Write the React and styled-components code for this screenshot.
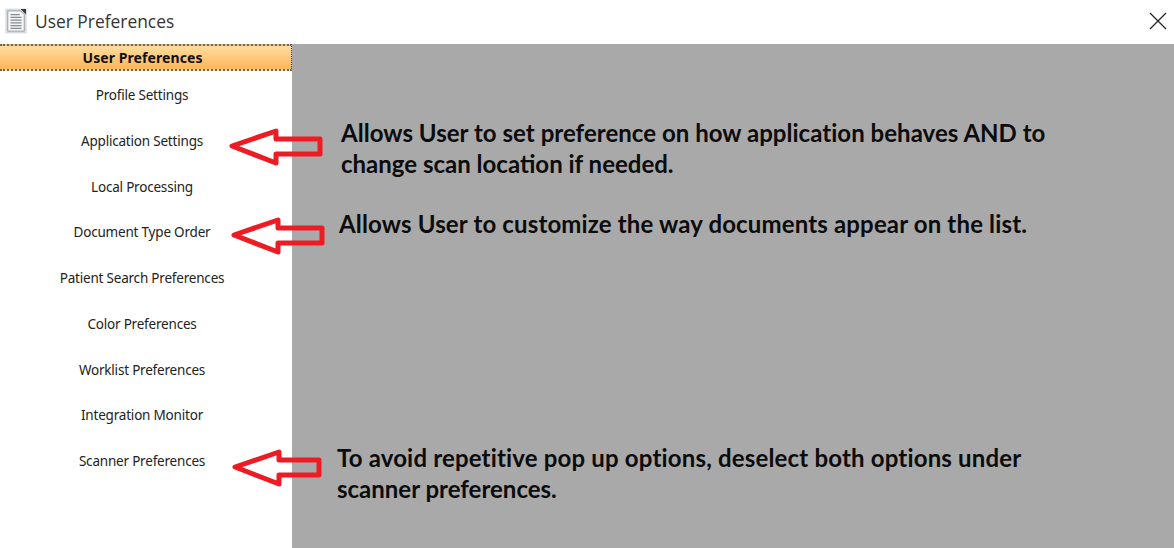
import React from 'react';
import styled, { createGlobalStyle } from 'styled-components';

const menuItems = [
  'Profile Settings',
  'Application Settings',
  'Local Processing',
  'Document Type Order',
  'Patient Search Preferences',
  'Color Preferences',
  'Worklist Preferences',
  'Integration Monitor',
  'Scanner Preferences',
];

const arrows = [
  { left: 229, top: 127, tail: 91 },
  { left: 231, top: 216, tail: 91 },
  { left: 232, top: 448, tail: 87 },
];

const notes = [
  {
    left: 341,
    top: 117,
    spacing: 0.03,
    lines: ['Allows User to set preference on how application behaves AND to', 'change scan location if needed.'],
  },
  {
    left: 339,
    top: 208,
    spacing: 0.15,
    lines: ['Allows User to customize the way documents appear on the list.'],
  },
  {
    left: 337,
    top: 442,
    spacing: 0.17,
    lines: ['To avoid repetitive pop up options, deselect both options under', 'scanner preferences.'],
  },
];

function PageIcon() {
  return (
    <svg width="22" height="26" viewBox="0 0 24 28">
      <rect x="0.5" y="0.5" width="23" height="27" fill="#d5d9dc" />
      <path d="M3 3H17L21 7V25H3Z" fill="#f4f5f6" stroke="#9aa0a4" />
      <path d="M17 1H23V7Z" fill="#33393d" />
      <path
        d="M6 7H16M6 10H18M6 13H18M6 16H18M6 19H18M6 22H18"
        stroke="#858b90"
        strokeWidth="1.4"
      />
    </svg>
  );
}

function CloseIcon() {
  return (
    <svg width="18" height="18" viewBox="0 0 18 18">
      <path d="M1 1L17 17M17 1L1 17" stroke="#222" strokeWidth="1.2" fill="none" />
    </svg>
  );
}

function Arrow({ tail }) {
  return (
    <svg width="96" height="40" viewBox="0 0 96 40">
      <path
        d={`M3 19L47 4V12H${tail}V27H47V36Z`}
        fill="none"
        stroke="#ed1c24"
        strokeWidth="5"
        strokeLinejoin="round"
      />
    </svg>
  );
}

function App() {
  return (
    <>
      <GlobalStyle />
      <Window>
        <TitleBar>
          <TitleGroup>
            <PageIcon />
            <Title>User Preferences</Title>
          </TitleGroup>
          <CloseButton>
            <CloseIcon />
          </CloseButton>
        </TitleBar>
        <Content>
          <Sidebar>
            <SidebarHeader>User Preferences</SidebarHeader>
            <MenuList>
              {menuItems.map((item) => (
                <MenuItem key={item}>{item}</MenuItem>
              ))}
            </MenuList>
          </Sidebar>
          <Workspace />
        </Content>
        {arrows.map((a) => (
          <ArrowSlot key={a.top} $left={a.left} $top={a.top}>
            <Arrow tail={a.tail} />
          </ArrowSlot>
        ))}
        {notes.map((n) => (
          <Note key={n.top} $left={n.left} $top={n.top} $spacing={n.spacing}>
            {n.lines.map((line) => (
              <NoteLine key={line}>{line}</NoteLine>
            ))}
          </Note>
        ))}
      </Window>
    </>
  );
}

const GlobalStyle = createGlobalStyle`
  html, body {
    margin: 0;
    padding: 0;
    background: #fff;
  }
`;

const Window = styled.div`
  position: relative;
  display: flex;
  flex-direction: column;
  width: 1174px;
  height: 548px;
  overflow: hidden;
  background: #fff;
`;

const TitleBar = styled.div`
  display: flex;
  align-items: center;
  justify-content: space-between;
  height: 44px;
  padding: 0 6px 3px 5px;
  box-sizing: border-box;
  flex-shrink: 0;
`;

const TitleGroup = styled.div`
  display: flex;
  align-items: center;
  gap: 8px;
`;

const Title = styled.span`
  font-family: 'Open Sans', sans-serif;
  font-size: 17.4px;
  color: #333;
`;

const CloseButton = styled.div`
  display: flex;
  margin-right: 1px;
`;

const Content = styled.div`
  display: flex;
  flex: 1;
  min-height: 0;
`;

const Sidebar = styled.div`
  width: 292px;
  flex-shrink: 0;
  display: flex;
  flex-direction: column;
`;

const SidebarHeader = styled.div`
  height: 27px;
  box-sizing: border-box;
  display: flex;
  align-items: center;
  justify-content: center;
  padding-right: 6px;
  border-top: 2px dotted #666;
  border-bottom: 2px dotted #666;
  border-right: 1px dotted #333;
  background: linear-gradient(#fedd9e, #fdb55a);
  font-family: 'Noto Sans', sans-serif;
  font-size: 14px;
  font-weight: 700;
  letter-spacing: 0.08px;
  color: #111;
`;

const MenuList = styled.div`
  display: flex;
  flex-direction: column;
  padding-top: 1.3px;
  padding-right: 8px;
`;

const MenuItem = styled.div`
  height: 45.75px;
  display: flex;
  align-items: center;
  justify-content: center;
  font-family: 'Noto Sans', sans-serif;
  font-size: 13.5px;
  letter-spacing: -0.2px;
  color: #222;
`;

const Workspace = styled.div`
  flex: 1;
  background: #a9a9a9;
`;

const ArrowSlot = styled.div`
  position: absolute;
  left: ${(p) => p.$left}px;
  top: ${(p) => p.$top}px;
  display: flex;
`;

const Note = styled.div`
  position: absolute;
  left: ${(p) => p.$left}px;
  top: ${(p) => p.$top}px;
  font-family: 'Lato', sans-serif;
  font-size: 24px;
  font-weight: 700;
  line-height: 31px;
  letter-spacing: ${(p) => p.$spacing}px;
  color: #0c0c0c;
`;

const NoteLine = styled.div`
  white-space: nowrap;

  & + & {
    letter-spacing: 0;
  }
`;

export default App;
